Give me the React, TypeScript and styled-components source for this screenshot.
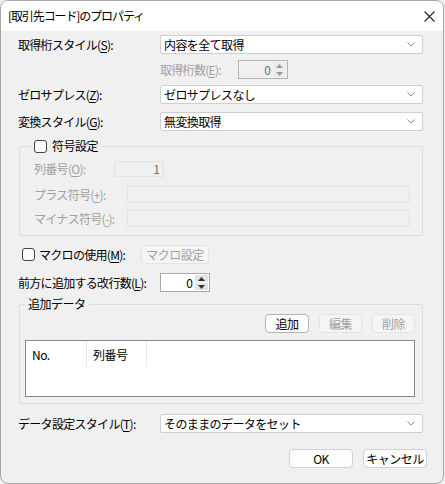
import styled, { createGlobalStyle } from 'styled-components'

const GlobalStyle = createGlobalStyle`
  html, body {
    margin: 0;
    padding: 0;
    background: #f0f0f0;
  }
  body {
    font-family: "Noto Sans CJK JP", "Noto Sans", sans-serif;
    font-size: 12px;
    color: #000;
  }
  * { box-sizing: border-box; }
`

const Window = styled.div`
  width: 444px;
  height: 484px;
  display: flex;
  flex-direction: column;
  background: #f0f0f0;
  border: 1px solid #a6a6a6;
  border-radius: 8px;
  overflow: hidden;
`

const TitleBar = styled.div`
  height: 30px;
  flex: none;
  display: flex;
  align-items: center;
  justify-content: space-between;
  background: #fff;
  padding: 0 8px 0 7px;
`

const Title = styled.div`
  font-size: 12px;
  letter-spacing: -1.1px;
  line-height: 16px;
`

const Body = styled.div`
  display: flex;
  flex-direction: column;
  padding: 4px 20px 0 17px;
`

const Row = styled.div<{ $top?: number; $indent?: number }>`
  display: flex;
  align-items: center;
  margin-top: ${p => p.$top ?? 0}px;
  padding-left: ${p => p.$indent ?? 0}px;
`

const Label = styled.span<{ $width?: number; $disabled?: boolean; $gap?: number }>`
  flex: none;
  width: ${p => (p.$width ? `${p.$width}px` : 'auto')};
  padding-left: ${p => p.$gap ?? 0}px;
  font-size: 12px;
  line-height: 16px;
  letter-spacing: -0.7px;
  white-space: nowrap;
  color: ${p => (p.$disabled ? '#a0a0a0' : '#000')};
  u { text-underline-offset: 2px; }
`

const Combo = styled.div`
  flex: 1;
  height: 19px;
  display: flex;
  align-items: center;
  justify-content: space-between;
  background: #fff;
  border: 1px solid #cfcfcf;
  border-radius: 2px;
  padding: 0 7px 0 3px;
  font-size: 12px;
  line-height: 16px;
  letter-spacing: -0.6px;
`

const Chevron = () => (
  <svg width="8" height="5" viewBox="0 0 8 5">
    <path d="M0.5 0.5 L4 4 L7.5 0.5" fill="none" stroke="#8a8a8a" strokeWidth="1" />
  </svg>
)

const Spin = styled.div<{ $disabled?: boolean }>`
  flex: none;
  width: 50px;
  height: 19px;
  display: flex;
  align-items: stretch;
  background: ${p => (p.$disabled ? '#f0f0f0' : '#fff')};
  border: 1px solid ${p => (p.$disabled ? '#b5b5b5' : '#a8a8a8')};
  padding: 1px;
`

const SpinValue = styled.div<{ $disabled?: boolean }>`
  flex: 1;
  text-align: right;
  padding-right: 2px;
  font-size: 12px;
  line-height: 15px;
  color: ${p => (p.$disabled ? '#6d6d6d' : '#000')};
`

const SpinArrows = styled.div<{ $disabled?: boolean }>`
  width: 13px;
  display: flex;
  flex-direction: column;
  gap: 1px;
  & > div {
    flex: 1;
    display: flex;
    align-items: center;
    justify-content: center;
    background: ${p => (p.$disabled ? '#ececec' : '#e3e3e3')};
  }
  svg path { fill: ${p => (p.$disabled ? '#9a9a9a' : '#333')}; }
`

const SpinBox = ({ value, disabled }: { value: string; disabled?: boolean }) => (
  <Spin $disabled={disabled}>
    <SpinValue $disabled={disabled}>{value}</SpinValue>
    <SpinArrows $disabled={disabled}>
      <div>
        <svg width="7" height="4" viewBox="0 0 7 4"><path d="M0 4 L3.5 0 L7 4 Z" /></svg>
      </div>
      <div>
        <svg width="7" height="4" viewBox="0 0 7 4"><path d="M0 0 L3.5 4 L7 0 Z" /></svg>
      </div>
    </SpinArrows>
  </Spin>
)

const Group = styled.fieldset<{ $top?: number; $pad?: string }>`
  margin: ${p => p.$top ?? 0}px 0 0 1px;
  padding: ${p => p.$pad ?? '0'};
  border: 1px solid #dcdcdc;
  border-radius: 2px;
  min-width: 0;
`

const Legend = styled.legend<{ $left?: number }>`
  margin-left: ${p => p.$left ?? 0}px;
  padding: 0 3px;
  height: 16px;
  display: flex;
  align-items: center;
  gap: 5px;
  font-size: 12px;
  line-height: 16px;
  letter-spacing: -0.5px;
`

const Check = styled.span`
  flex: none;
  width: 13px;
  height: 13px;
  border: 1px solid #444;
  border-radius: 3px;
  background: #fbfbfb;
`

const Field = styled.div<{ $width: number; $height: number }>`
  flex: none;
  width: ${p => p.$width}px;
  height: ${p => p.$height}px;
  border: 1px solid #e4e4e4;
  background: #f0f0f0;
  text-align: right;
  padding-right: 3px;
  font-size: 12px;
  line-height: 14px;
  color: #6d6d6d;
`

const Button = styled.button<{ $width: number; $default?: boolean }>`
  flex: none;
  width: ${p => p.$width}px;
  height: 19px;
  padding: 0;
  margin: 0;
  font-family: inherit;
  font-size: 12px;
  line-height: 15px;
  letter-spacing: -0.5px;
  color: #000;
  background: #fdfdfd;
  border: 1px solid ${p => (p.$default ? '#b3b3b3' : '#d0d0d0')};
  border-radius: 4px;
  &:disabled {
    color: #a0a0a0;
    background: #f5f5f5;
    border-color: #e3e3e3;
  }
`

const ButtonBar = styled.div<{ $top?: number; $right?: number }>`
  display: flex;
  justify-content: flex-end;
  gap: 10px;
  margin-top: ${p => p.$top ?? 0}px;
  margin-right: ${p => p.$right ?? 0}px;
`

const ListView = styled.div`
  height: 57px;
  margin-top: 7px;
  background: #fff;
  border: 1px solid #828790;
`

const ListHeader = styled.div`
  display: flex;
  height: 26px;
`

const HeaderCell = styled.div<{ $width: number }>`
  width: ${p => p.$width}px;
  display: flex;
  align-items: center;
  padding-left: 6px;
  border-right: 1px solid #e5e5e5;
  font-size: 12px;
  letter-spacing: -0.5px;
`

export default function App() {
  return (
    <>
      <GlobalStyle />
      <Window>
        <TitleBar>
          <Title>[取引先コード]のプロパティ</Title>
          <svg width="11" height="11" viewBox="0 0 11 11">
            <path d="M0.5 0.5 L10.5 10.5 M10.5 0.5 L0.5 10.5" stroke="#222" strokeWidth="1.1" />
          </svg>
        </TitleBar>
        <Body>
          <Row>
            <Label $width={142}>取得桁スタイル(<u>S</u>):</Label>
            <Combo>内容を全て取得<Chevron /></Combo>
          </Row>
          <Row $top={6} $indent={142}>
            <Label $width={78} $disabled>取得桁数(<u>E</u>):</Label>
            <SpinBox value="0" disabled />
          </Row>
          <Row $top={6}>
            <Label $width={142}>ゼロサプレス(<u>Z</u>):</Label>
            <Combo>ゼロサプレスなし<Chevron /></Combo>
          </Row>
          <Row $top={8}>
            <Label $width={142}>変換スタイル(<u>G</u>):</Label>
            <Combo>無変換取得<Chevron /></Combo>
          </Row>

          <Group $top={7} $pad="0 14px 8px 14px">
            <Legend $left={-3}>
              <Check />
              符号設定
            </Legend>
            <Row $top={7}>
              <Label $width={80} $disabled>列番号(<u>O</u>):</Label>
              <Field $width={50} $height={16}>1</Field>
            </Row>
            <Row $top={9}>
              <Label $width={93} $disabled>プラス符号(<u>+</u>):</Label>
              <Field $width={283} $height={17} />
            </Row>
            <Row $top={7}>
              <Label $width={93} $disabled>マイナス符号(<u>-</u>):</Label>
              <Field $width={283} $height={17} />
            </Row>
          </Group>

          <Row $top={9} $indent={4}>
            <Check />
            <Label $width={106} $gap={4}>マクロの使用(<u>M</u>):</Label>
            <Button $width={68} disabled>マクロ設定</Button>
          </Row>
          <Row $top={9}>
            <Label $width={142}>前方に追加する改行数(<u>L</u>):</Label>
            <SpinBox value="0" />
          </Row>

          <Group $top={4} $pad="0 7px 6px 5px">
            <Legend $left={0}>追加データ</Legend>
            <ButtonBar $top={2}>
              <Button $width={44} $default>追加</Button>
              <Button $width={43} disabled>編集</Button>
              <Button $width={43} disabled>削除</Button>
            </ButtonBar>
            <ListView>
              <ListHeader>
                <HeaderCell $width={61}>No.</HeaderCell>
                <HeaderCell $width={60}>列番号</HeaderCell>
              </ListHeader>
            </ListView>
          </Group>

          <Row $top={10}>
            <Label $width={142}>データ設定スタイル(<u>T</u>):</Label>
            <Combo>そのままのデータをセット<Chevron /></Combo>
          </Row>

          <ButtonBar $top={16} $right={-4}>
            <Button $width={64}>OK</Button>
            <Button $width={64}>キャンセル</Button>
          </ButtonBar>
        </Body>
      </Window>
    </>
  )
}
